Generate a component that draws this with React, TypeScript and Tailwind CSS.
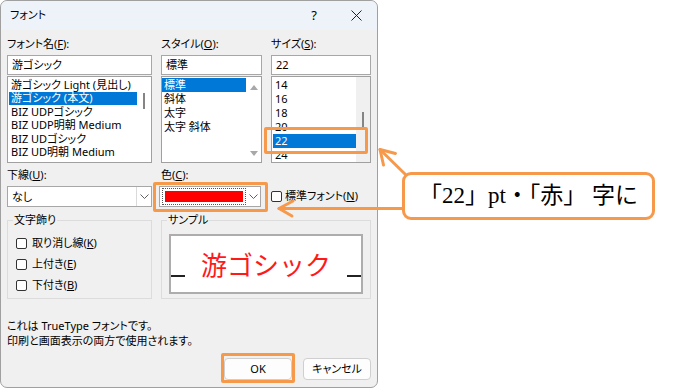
import React from 'react';

function Mn({ k }: { k: string }) {
  return <span className="underline underline-offset-[1px]">{k}</span>;
}

function Chevron() {
  return (
    <svg width="9" height="5" viewBox="0 0 9 5">
      <path d="M0.5 0.5 L4.5 4.5 L8.5 0.5" fill="none" stroke="#606060" strokeWidth="1" />
    </svg>
  );
}

function CheckBox() {
  return <span className="inline-block h-[11px] w-[11px] shrink-0 rounded-[2px] border border-[#333] bg-white" />;
}

const fontItems = [
  '游ゴシック Light (見出し)',
  '游ゴシック (本文)',
  'BIZ UDPゴシック',
  'BIZ UDP明朝 Medium',
  'BIZ UDゴシック',
  'BIZ UD明朝 Medium',
];
const styleItems = ['標準', '斜体', '太字', '太字 斜体'];
const sizeItems = ['14', '16', '18', '20', '22', '24'];

export default function App() {
  return (
    <div className="relative h-[392px] w-[674px] overflow-hidden bg-white font-['Noto_Sans','Noto_Sans_CJK_JP',sans-serif] text-[11px] text-black [font-feature-settings:'palt']">
      {/* dialog */}
      <div className="flex h-[388px] w-[378px] flex-col rounded-[7px] border border-[#a0a0a0] bg-[#f0f0f0]">
        <div className="flex h-[29px] shrink-0 items-center rounded-t-[7px] bg-[#eef3f9] pl-[9px]">
          <span>フォント</span>
          <span className="ml-auto text-[13px]">?</span>
          <svg className="ml-[34px] mr-[15px]" width="11" height="11" viewBox="0 0 11 11">
            <path d="M0.5 0.5 L10.5 10.5 M10.5 0.5 L0.5 10.5" stroke="#222" strokeWidth="1" />
          </svg>
        </div>

        <div className="flex flex-col pl-[6px] pr-[6px]">
          {/* row 1 */}
          <div className="mt-[6px] flex gap-[9px]">
            <div className="flex w-[145px] flex-col">
              <div className="h-[16px] leading-[16px]">
                フォント名(<Mn k="F" />):
              </div>
              <div className="mt-[3px] h-[20px] border border-[#a7a7a7] bg-white pl-[4px] leading-[18px]">游ゴシック</div>
              <div className="mt-[1px] flex h-[87px] border border-[#a0a0a0] bg-white">
                <div className="flex w-[129px] flex-col pt-[1px]">
                  {fontItems.map((f, i) => (
                    <div
                      key={f}
                      className={
                        i === 1
                          ? 'ml-[1px] flex h-[13.5px] items-center bg-[#0078d7] pl-[2px] text-white'
                          : 'ml-[1px] flex h-[13.5px] items-center pl-[2px]'
                      }
                    >
                      {f}
                    </div>
                  ))}
                </div>
                <div className="flex flex-1 justify-center pt-[16px]">
                  <div className="h-[16px] w-[2px] bg-[#858585]" />
                </div>
              </div>
            </div>

            <div className="flex w-[101px] flex-col">
              <div className="h-[16px] leading-[16px]">
                スタイル(<Mn k="O" />):
              </div>
              <div className="mt-[3px] h-[20px] border border-[#a7a7a7] bg-white pl-[4px] leading-[18px]">標準</div>
              <div className="mt-[1px] flex h-[87px] border border-[#a0a0a0] bg-white">
                <div className="flex w-[84px] flex-col pt-[1px]">
                  {styleItems.map((s, i) => (
                    <div
                      key={s}
                      className={
                        i === 0
                          ? 'flex h-[14px] items-center bg-[#0078d7] pl-[2px] text-white'
                          : 'flex h-[14px] items-center pl-[2px]'
                      }
                    >
                      {s}
                    </div>
                  ))}
                </div>
                <div className="flex flex-1 flex-col items-center justify-between pb-[6px] pt-[8px]">
                  <svg width="8" height="5" viewBox="0 0 8 5">
                    <path d="M0 5 L4 0 L8 5Z" fill="#a8a8a8" />
                  </svg>
                  <svg width="8" height="5" viewBox="0 0 8 5">
                    <path d="M0 0 L4 5 L8 0Z" fill="#a8a8a8" />
                  </svg>
                </div>
              </div>
            </div>

            <div className="flex w-[100px] flex-col">
              <div className="h-[16px] leading-[16px]">
                サイズ(<Mn k="S" />):
              </div>
              <div className="mt-[3px] h-[20px] border border-[#a7a7a7] bg-white pl-[4px] leading-[18px]">22</div>
              <div className="mt-[1px] flex h-[87px] border border-[#a0a0a0] bg-white">
                <div className="flex w-[84px] flex-col pt-[1px]">
                  {sizeItems.map((s) => (
                    <div
                      key={s}
                      className={
                        s === '22'
                          ? 'relative ml-[1px] flex h-[14px] items-center bg-[#0078d7] pl-[2px] text-white'
                          : 'ml-[1px] flex h-[14px] items-center pl-[2px]'
                      }
                    >
                      {s}
                      {s === '22' && (
                        <span className="absolute left-[-9px] top-[-7px] h-[27px] w-[104px] rounded-[2px] border-[3px] border-[#f7994a]" />
                      )}
                    </div>
                  ))}
                </div>
                <div className="flex flex-1 justify-center bg-[#f0f0f0] pt-[35px]">
                  <div className="h-[16px] w-[2px] bg-[#858585]" />
                </div>
              </div>
            </div>
          </div>

          {/* row 2 */}
          <div className="mt-[4px] flex gap-[9px]">
            <div className="flex w-[145px] flex-col">
              <div className="h-[16px] leading-[16px]">
                下線(<Mn k="U" />):
              </div>
              <div className="mt-[3px] flex h-[21px] border border-[#a7a7a7] bg-white">
                <div className="flex-1 pl-[4px] leading-[19px]">なし</div>
                <div className="flex w-[15px] items-center justify-center border-l border-[#dadada]">
                  <Chevron />
                </div>
              </div>
            </div>
            <div className="flex w-[101px] flex-col">
              <div className="h-[16px] leading-[16px]">
                色(<Mn k="C" />):
              </div>
              <div className="relative ml-[-2px] mt-[3px] flex h-[21px] w-[102px] border border-[#a7a7a7] bg-white">
                <div className="ml-[2px] mt-[1px] h-[17px] w-[84px] border border-dotted border-[#555] p-[2px]">
                  <div className="h-full w-full bg-[#ff0000]" />
                </div>
                <div className="flex flex-1 items-center justify-center">
                  <Chevron />
                </div>
                <span className="absolute left-[-7px] top-[-5px] h-[30px] w-[115px] rounded-[2px] border-[3px] border-[#f7994a]" />
              </div>
            </div>
            <div className="flex items-end">
              <div className="flex h-[21px] items-center gap-[3px]">
                <CheckBox />
                <span>
                  標準フォント(<Mn k="N" />)
                </span>
              </div>
            </div>
          </div>

          {/* groups */}
          <div className="mt-[13px] flex gap-[9px]">
            <div className="relative h-[79px] w-[145px] border border-[#dcdcdc]">
              <span className="absolute left-[5px] top-[-9px] bg-[#f0f0f0] px-[1px] leading-[16px]">文字飾り</span>
              <div className="flex flex-col pl-[8px] pt-[12px]">
                <div className="flex h-[21px] items-center gap-[5px]">
                  <CheckBox />
                  <span>
                    取り消し線(<Mn k="K" />)
                  </span>
                </div>
                <div className="flex h-[21px] items-center gap-[5px]">
                  <CheckBox />
                  <span>
                    上付き(<Mn k="E" />)
                  </span>
                </div>
                <div className="flex h-[21px] items-center gap-[5px]">
                  <CheckBox />
                  <span>
                    下付き(<Mn k="B" />)
                  </span>
                </div>
              </div>
            </div>
            <div className="relative h-[79px] w-[210px] border border-[#dcdcdc]">
              <span className="absolute left-[5px] top-[-9px] bg-[#f0f0f0] px-[1px] leading-[16px]">サンプル</span>
              <div className="ml-[7px] mt-[13px] flex h-[60px] w-[194px] items-center justify-between border-2 border-[#adadad] bg-white">
                <div className="mt-[23px] h-[2px] w-[14px] bg-[#222]" />
                <span className="font-['Noto_Sans_CJK_JP',sans-serif] text-[26px] leading-[30px] text-[#ff1a1a] [font-feature-settings:normal]">
                  游ゴシック
                </span>
                <div className="mt-[23px] h-[2px] w-[14px] bg-[#222]" />
              </div>
            </div>
          </div>

          <div className="mt-[19px] leading-[15px]">
            <div>これは TrueType フォントです。</div>
            <div>印刷と画面表示の両方で使用されます。</div>
          </div>

          <div className="mt-[10px] flex justify-end gap-[11px]">
            <div className="relative flex h-[22px] w-[68px] items-center justify-center rounded-[4px] border border-[#cfcfcf] bg-[#fdfdfd]">
              OK
              <span className="absolute left-[-4px] top-[-6px] h-[30px] w-[74px] rounded-[2px] border-[3px] border-[#f7994a]" />
            </div>
            <div className="flex h-[22px] w-[68px] items-center justify-center rounded-[4px] border border-[#cfcfcf] bg-[#fdfdfd]">
              キャンセル
            </div>
          </div>
        </div>
      </div>

      {/* callout arrows */}
      <svg className="pointer-events-none absolute left-0 top-0" width="674" height="392" viewBox="0 0 674 392">
        <g fill="none" stroke="#f7994a" strokeWidth="3" strokeLinecap="round" strokeLinejoin="round">
          <path d="M404 208.5 L279 208.5" />
          <path d="M293 201 L279 208.5 L292 216" />
          <path d="M406 175 L380 149.5" />
          <path d="M395.5 153.5 L380 149.5 L383.5 165" />
        </g>
      </svg>

      <div className="absolute left-[402px] top-[172px] flex h-[48px] w-[253px] items-center justify-center whitespace-nowrap rounded-[9px] border-[3px] border-[#f7994a] bg-white font-['Liberation_Serif','Noto_Sans_CJK_JP',serif] text-[23px] leading-[30px] [font-feature-settings:normal]">
        「22」pt・「赤」 字に
      </div>
    </div>
  );
}
